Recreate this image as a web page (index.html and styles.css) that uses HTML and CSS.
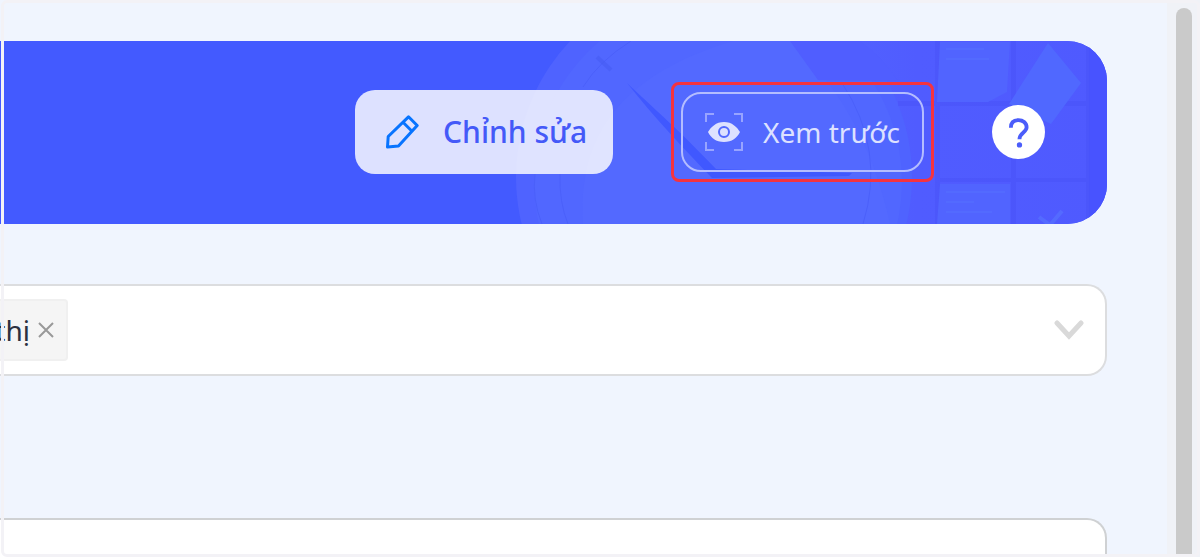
FILE: index.html
```
<!DOCTYPE html>
<html lang="vi">
<head>
    <meta charset="UTF-8">
    <meta name="viewport" content="width=device-width, initial-scale=1.0">
    <title>Xem trước</title>
    <link rel="stylesheet" href="styles.css">
</head>
<body>
    <div class="page">
        <main class="content">
            <!-- Banner -->
            <header class="banner">
                <svg class="banner-art" viewBox="500 41 607 183" preserveAspectRatio="xMaxYMid slice" aria-hidden="true">
                    <defs>
                        <linearGradient id="board" x1="0" x2="1">
                            <stop offset="0" stop-color="#5265ff"/>
                            <stop offset="0.4" stop-color="#505cff"/>
                            <stop offset="1" stop-color="#4f5aff"/>
                        </linearGradient>
                    </defs>
                    <path fill="url(#board)" d="M790 41h317v183H790z"/>
                    <path fill="#4853ff" d="M1089 41h18v183h-18z"/>
                    <circle cx="714" cy="177" r="198" fill="#4f63ff"/>
                    <circle cx="718" cy="182" r="184" fill="#5167ff"/>
                    <path fill="#5369ff" d="M583 224c-6-90 40-150 150-183h59c45 45 80 100 98 183z"/>
                    <path fill="#505eff" d="M790 41h70c15 11 28 25 38 40l-80-1z"/>
                    <path fill="none" stroke="#4b60fa" d="M535 174q-3 25 7 50M560 174q-1 28 8 50M583 87q16-26 48-46M842 83q44 67 21 141"/>
                    <path stroke="#455bf2" stroke-width="4" opacity=".5" d="M597 57l14 13"/>
                    <path fill="#4058ff" d="M627 83c22 21 50 45 89 86l136 4-3 3-137 2c-28-29-59-62-85-95z"/>
                    <path fill="#4a54f8" opacity=".6" d="M935 41h5v183h-5zM1011 41h5v183h-5zM1086 41h4v183h-4zM898 101h191v5H898zM940 178h149v4H940z"/>
                    <path fill="#5164ff" d="M940 42h70l-3 50-19 10h-51zM940 184h70v40h-73z"/>
                    <path fill="#5068ff" d="M1048 43l33 40-30 41-42-20z"/>
                    <path stroke="#536aff" stroke-width="2" d="M946 49h38M946 59h43M946 192h59M946 202h28M946 212h46"/>
                    <path fill="none" stroke="#546aff" stroke-width="4" d="M1039 217l11 8 12-14"/>
                </svg>

                <button type="button" class="btn btn-edit">
                    <svg class="icon-pencil" viewBox="0 0 34 34" aria-hidden="true">
                        <path d="M2.500 32l.7-10.500L23.500 1.800l8.700 8.700L13.500 31z"/>
                        <path d="M18 7.300l9 9"/>
                    </svg>
                    Chỉnh sửa
                </button>
                <div class="highlight">
                    <button type="button" class="btn btn-preview">
                        <svg class="icon-eye" viewBox="0 0 38 38" aria-hidden="true">
                            <path class="corners" d="M1 9V1h8M29 1h8v8M37 29v8h-8M9 37H1v-8"/>
                            <path class="eye" fill-rule="evenodd" d="M19 9C11 9 6 14 3 19c3 6 8 10 16 10s13-4 16-10C32 14 27 9 19 9zm0 4a6 6 0 1 1 0 12 6 6 0 0 1 0-12z"/>
                            <circle class="eye" cx="19" cy="19" r="4"/>
                        </svg>
                        Xem trước
                    </button>
                </div>
                <button type="button" class="btn-help" aria-label="Trợ giúp">
                    <svg class="icon-question" viewBox="0 0 22 32" aria-hidden="true">
                        <path d="M3 11C3 5 6.500 3 11 3s8.500 3 8.500 7.500C19.500 16 12 16 12 23"/>
                        <circle cx="12" cy="29" r="2.800"/>
                    </svg>
                </button>
            </header>

            <!-- Select -->
            <div class="field">
                <span class="tag">
                    <span class="tag-text">thị</span>
                    <button type="button" class="icon-btn" aria-label="Xóa">
                        <svg class="icon-close" viewBox="0 0 16 16" aria-hidden="true"><path d="M1 1l14 14M15 1L1 15"/></svg>
                    </button>
                </span>
                <button type="button" class="icon-btn" aria-label="Mở danh sách">
                    <svg class="icon-chevron" viewBox="0 0 30 20" aria-hidden="true"><path d="M3 3l12 13L27 3"/></svg>
                </button>
            </div>

            <div class="field field-next"></div>
        </main>

        <div class="scrollbar"><div class="thumb"></div></div>
    </div>
    <div class="frame"></div>
</body>
</html>
```
FILE: styles.css
```
* {
    box-sizing: border-box;
}
body {
    margin: 0;
    font-family: "Noto Sans", "Open Sans", sans-serif;
    background-color: #f0f5fe;
}
button {
    font-family: inherit;
    cursor: pointer;
}
.page {
    display: flex;
    height: 100vh;
    overflow: hidden;
}
.content {
    flex: 1;
    min-width: 0;
    padding: 41px 60px 0 0;
}
.banner {
    position: relative;
    display: flex;
    justify-content: flex-end;
    align-items: center;
    gap: 58px;
    padding: 41px 62px 42px 0;
    border-radius: 0 40px 40px 0;
    background-color: #435aff;
    overflow: hidden;
}
.banner-art {
    position: absolute;
    top: 0;
    right: 0;
    height: 100%;
}
.btn {
    position: relative;
    display: flex;
    align-items: center;
    line-height: 40px;
    white-space: nowrap;
}
.btn-edit {
    gap: 24px;
    padding: 22px 26px 22px 30px;
    border: none;
    border-radius: 20px;
    background-color: rgba(255, 255, 255, 0.82);
    color: #4459f8;
    font-size: 30px;
    font-weight: 500;
}
.highlight {
    position: relative;
    padding: 7px;
    border: 3px solid #f5333f;
    border-radius: 8px;
}
.btn-preview {
    gap: 20px;
    padding: 18px 22px;
    border: 2px solid #b4bdff;
    border-radius: 20px;
    background: none;
    color: #dde1ff;
    font-size: 28px;
}
.btn-help {
    position: relative;
    display: flex;
    justify-content: center;
    align-items: center;
    width: 53px;
    height: 54px;
    padding: 0;
    border: none;
    border-radius: 50%;
    background-color: #fff;
}
.icon-pencil {
    width: 34px;
    height: 34px;
    fill: none;
    stroke: #0874ff;
    stroke-width: 3;
    stroke-linejoin: round;
}
.icon-eye {
    width: 38px;
    height: 38px;
}
.corners {
    fill: none;
    stroke: #98a4ff;
    stroke-width: 2;
}
.eye {
    fill: #dde1ff;
}
.icon-question {
    width: 21px;
    height: 31px;
    fill: none;
    stroke: #4b5dfa;
    stroke-width: 4;
}
.icon-question circle {
    fill: #4b5dfa;
    stroke: none;
}
.field {
    display: flex;
    justify-content: space-between;
    align-items: center;
    height: 92px;
    margin-top: 60px;
    padding-right: 21px;
    border: 2px solid #dcdddf;
    border-left: none;
    border-radius: 0 20px 20px 0;
    background-color: #fff;
}
.field-next {
    margin-top: 142px;
    border-color: #cfd1d3;
}
.tag {
    display: flex;
    justify-content: flex-end;
    align-items: center;
    gap: 8px;
    width: 68px;
    height: 62px;
    padding-right: 12px;
    border: 2px solid #f0f0f0;
    border-left: none;
    border-radius: 0 4px 4px 0;
    background-color: #f5f5f5;
    color: #2c3140;
    font-size: 28px;
    overflow: hidden;
}
.icon-btn {
    display: flex;
    padding: 0;
    border: none;
    background: none;
}
.icon-close {
    width: 16px;
    height: 16px;
    fill: none;
    stroke: #999;
    stroke-width: 2;
}
.icon-chevron {
    width: 30px;
    height: 20px;
    fill: none;
    stroke: #d9d9d9;
    stroke-width: 5;
    stroke-linecap: round;
}
.scrollbar {
    width: 33px;
    padding: 8px 8px 3px 9px;
    background-color: #f0f2f7;
}
.thumb {
    height: 100%;
    border-radius: 8px 8px 0 0;
    background-color: #cacaca;
}
/* thin border over the page edges */
.frame {
    position: fixed;
    inset: 0 0 0 1px;
    border: 3px solid #f3f2f6;
    border-radius: 6px;
    pointer-events: none;
}
```
